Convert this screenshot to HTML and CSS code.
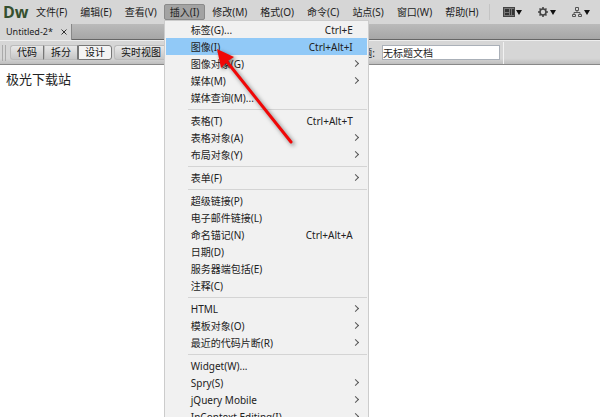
FILE: index.html
```html
<!DOCTYPE html>
<html lang="zh-CN">
<head>
  <meta charset="UTF-8">
  <title>Untitled-2</title>
  <link rel="stylesheet" href="styles.css">
</head>
<body>

<header class="menubar">
  <div class="logo">Dw</div>
  <nav class="menus">
    <button type="button">文件(F)</button>
    <button type="button">编辑(E)</button>
    <button type="button">查看(V)</button>
    <div class="menu-open">
      <button type="button" class="active">插入(I)</button>
      <ul class="dropdown">
        <li><button type="button">标签(G)...<kbd>Ctrl+E</kbd></button></li>
        <li><button type="button" class="current">图像(I)<kbd>Ctrl+Alt+I</kbd></button></li>
        <li><button type="button" class="sub">图像对象(G)</button></li>
        <li><button type="button" class="sub">媒体(M)</button></li>
        <li><button type="button">媒体查询(M)...</button></li>
        <li class="line"></li>
        <li><button type="button">表格(T)<kbd>Ctrl+Alt+T</kbd></button></li>
        <li><button type="button" class="sub">表格对象(A)</button></li>
        <li><button type="button" class="sub">布局对象(Y)</button></li>
        <li class="line"></li>
        <li><button type="button" class="sub">表单(F)</button></li>
        <li class="line"></li>
        <li><button type="button">超级链接(P)</button></li>
        <li><button type="button">电子邮件链接(L)</button></li>
        <li><button type="button">命名锚记(N)<kbd>Ctrl+Alt+A</kbd></button></li>
        <li><button type="button">日期(D)</button></li>
        <li><button type="button">服务器端包括(E)</button></li>
        <li><button type="button">注释(C)</button></li>
        <li class="line"></li>
        <li><button type="button" class="sub">HTML</button></li>
        <li><button type="button" class="sub">模板对象(O)</button></li>
        <li><button type="button" class="sub">最近的代码片断(R)</button></li>
        <li class="line"></li>
        <li><button type="button">Widget(W)...</button></li>
        <li><button type="button" class="sub">Spry(S)</button></li>
        <li><button type="button" class="sub">jQuery Mobile</button></li>
        <li><button type="button" class="sub">InContext Editing(I)</button></li>
      </ul>
    </div>
    <button type="button">修改(M)</button>
    <button type="button">格式(O)</button>
    <button type="button">命令(C)</button>
    <button type="button">站点(S)</button>
    <button type="button">窗口(W)</button>
    <button type="button">帮助(H)</button>
  </nav>
  <div class="tools">
    <button type="button" aria-label="布局">
      <svg width="19" height="12" viewBox="0 0 19 12">
        <rect x="0.5" y="1.5" width="11" height="9" fill="#777" stroke="#444"/>
        <path d="M2 3h4v3H2zM2 7h4v2H2zM7 3h1v6H7zM9 3h2v6H9z" fill="#333"/>
        <path d="M13 4h6l-3 5z" fill="#111"/>
      </svg>
    </button>
    <button type="button" aria-label="扩展">
      <svg width="19" height="12" viewBox="0 0 19 12">
        <circle cx="6" cy="6" r="3" fill="none" stroke="#444" stroke-width="1.6"/>
        <path d="M6 1v2M6 9v2M1 6h2M9 6h2M2.5 2.5l1.3 1.3M8.2 8.2l1.3 1.3M2.5 9.5l1.3-1.3M8.2 3.8l1.3-1.3" stroke="#444" stroke-width="1.6"/>
        <path d="M13 4h6l-3 5z" fill="#111"/>
      </svg>
    </button>
    <button type="button" aria-label="站点">
      <svg width="19" height="12" viewBox="0 0 19 12">
        <path d="M4.500 1.500h3v3h-3zM1.500 8.500h3v2h-3zM7.500 8.500h3v2h-3zM6 4.500v2M3 8.500v-2h6v2" fill="none" stroke="#555"/>
        <path d="M13 4h6l-3 5z" fill="#111"/>
      </svg>
    </button>
  </div>
</header>

<div class="tabs">
  <div class="tab">Untitled-2*
    <button type="button" aria-label="关闭">
      <svg width="6" height="6" viewBox="0 0 6 6"><path d="M0.500 0.500l5 5M5.500 0.500l-5 5" stroke="#333"/></svg>
    </button>
  </div>
</div>

<div class="toolbar">
  <span class="grip"></span>
  <div class="views">
    <button type="button">代码</button>
    <button type="button">拆分</button>
    <button type="button" class="on">设计</button>
  </div>
  <button type="button" class="live">实时视图</button>
  <div class="doc-title">
    <label for="title">标题:</label>
    <input id="title" type="text" value="无标题文档">
  </div>
</div>

<main class="page">极光下载站</main>

<svg class="pointer" width="90" height="110" viewBox="0 0 90 110">
  <path d="M10 12L81 101" stroke="#f00808" stroke-width="3" stroke-linecap="round"/>
  <path d="M7 8L24 16L18 20L11 27z" fill="#f00808"/>
</svg>

</body>
</html>
```
FILE: styles.css
```css
* {
  box-sizing: border-box;
}

body {
  margin: 0;
  min-height: 100vh;
  overflow: hidden;
  background: #fff;
  color: #222;
  font: 10px/14px "Noto Sans", "Noto Sans CJK SC", sans-serif;
}

button {
  margin: 0;
  padding: 0;
  border: none;
  background: none;
  color: inherit;
  font: inherit;
  white-space: nowrap;
}

/* menu bar */
.menubar {
  display: flex;
  align-items: center;
  height: 24px;
  background: #d6d6d6;
}

.logo {
  width: 30px;
  padding-left: 3px;
  color: #35502f;
  font: bold 16px/24px "Open Sans", sans-serif;
}

.menus {
  display: flex;
  height: 16px;
  gap: 1px;
}

.menus > button,
.menu-open > button {
  height: 16px;
  padding: 0 5px;
  border: 1px solid transparent;
  line-height: 14px;
}

.menu-open {
  position: relative;
}

.menu-open > .active {
  border-color: #8a8a8a;
  border-radius: 2px;
  background: #a3a3a3;
}

.tools {
  display: flex;
  gap: 15px;
  height: 16px;
  margin-left: 4px;
  padding-left: 13px;
  border-left: 1px solid #c4c4c4;
}

.tools svg {
  display: block;
}

/* dropdown */
.dropdown {
  position: absolute;
  z-index: 2;
  top: 100%;
  left: 0;
  width: 205px;
  margin: 0;
  padding: 0 1px;
  border: 1px solid #ccc;
  background: #f1f1f1;
  list-style: none;
}

.dropdown button {
  display: flex;
  align-items: center;
  justify-content: space-between;
  width: 100%;
  height: 17px;
  padding: 0 14px 0 25px;
}

.dropdown .current {
  background: #91c9f7;
}

.dropdown kbd {
  font: inherit;
}

.dropdown .sub {
  padding-right: 9px;
}

.dropdown .sub::after {
  content: "";
  width: 4px;
  height: 4px;
  border: solid #555;
  border-width: 1px 1px 0 0;
  transform: rotate(45deg);
}

.line {
  height: 1px;
  margin: 3px 0 2px 22px;
  background: #d4d4d4;
}

/* document tabs */
.tabs {
  display: flex;
  height: 16px;
  border-bottom: 1px solid #666;
  background: linear-gradient(#bababa, #a6a6a6);
}

.tab {
  display: flex;
  align-items: center;
  gap: 8px;
  height: 16px;
  padding: 0 4px 0 6px;
  border-right: 1px solid #888;
  background: #d6d6d6;
  font-size: 9px;
}

.tab svg {
  display: block;
}

/* document toolbar */
.toolbar {
  display: flex;
  align-items: center;
  height: 25px;
  padding: 0 2px;
  border-top: 1px solid #eee;
  border-bottom: 1px solid #888;
  background: linear-gradient(#d6d6d6 75%, #bebebe);
}

.grip {
  width: 4px;
  height: 16px;
  margin-right: 4px;
  border: solid #aaa;
  border-width: 0 1px;
}

.views {
  display: flex;
  margin-right: 2px;
}

.views button,
.live {
  width: 34px;
  height: 15px;
  border: 1px solid #bbb;
  border-right-color: #777;
  background: linear-gradient(#e8e8e8, #c6c6c6);
  color: #111;
  line-height: 13px;
}

.views button:first-child {
  border-radius: 3px 0 0 3px;
}

.views .on {
  border-color: #777;
  border-radius: 0 3px 3px 0;
  background: #f4f4f4;
}

.toolbar .live {
  width: 54px;
  border-radius: 3px;
}

.doc-title {
  display: flex;
  align-items: center;
  gap: 7px;
  height: 22px;
  margin-left: auto;
  margin-right: 94px;
  padding-right: 3px;
  border-right: 1px solid #f2f2f2;
}

.doc-title input {
  width: 118px;
  height: 15px;
  padding: 0;
  border: 1px solid #aab0b8;
  background: #fff;
  color: #222;
  font: inherit;
}

.page {
  padding: 4px 6px;
  font-size: 13px;
  line-height: 20px;
}

/* red arrow over the menu */
.pointer {
  position: absolute;
  z-index: 3;
  top: 41px;
  left: 210px;
  pointer-events: none;
  filter: drop-shadow(2px 2px 2px rgba(0, 0, 0, 0.5));
}
```
